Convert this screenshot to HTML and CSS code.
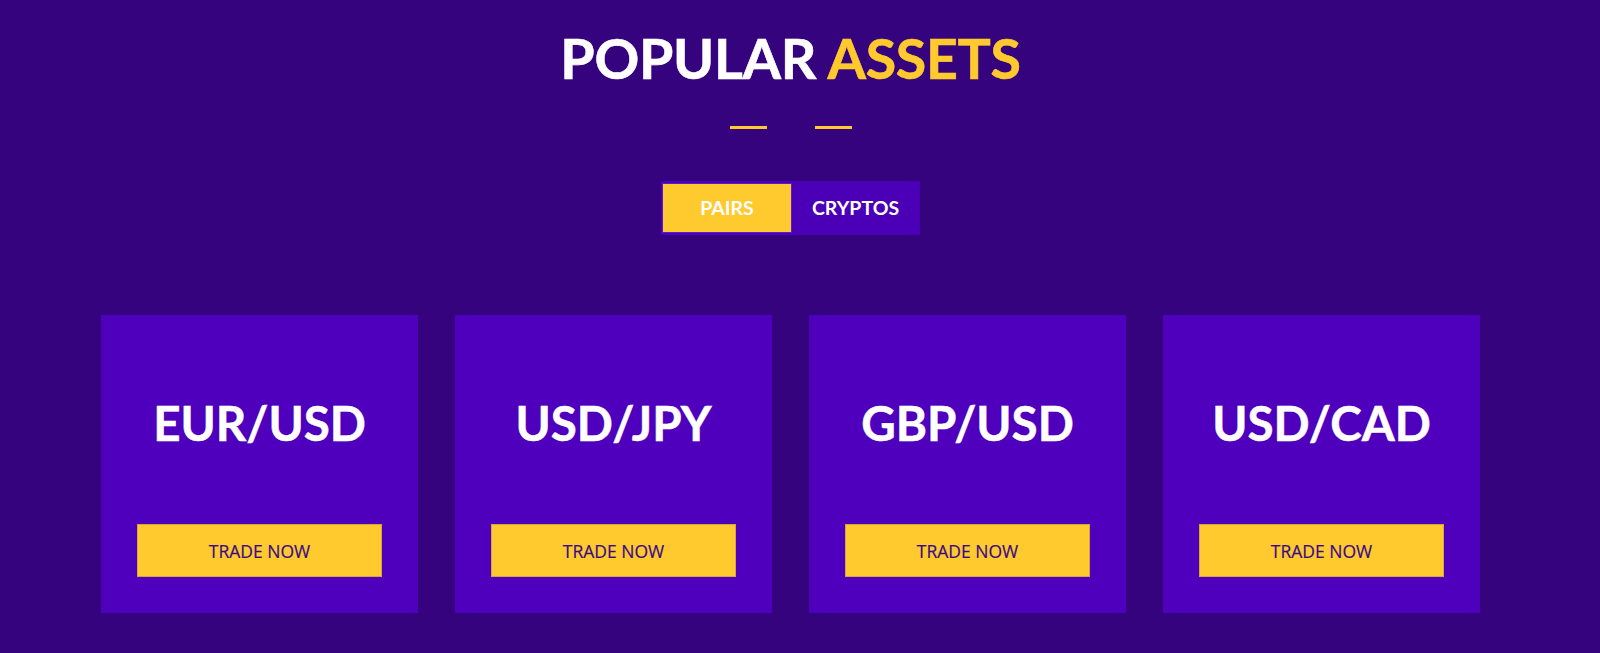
FILE: index.html
```html
<!DOCTYPE html>
<html lang="en">
<head>
<meta charset="utf-8">
<title>Popular Assets</title>
<link rel="stylesheet" href="styles.css">
</head>
<body>
<section class="assets">
  <h2 class="title">POPULAR <span class="accent">ASSETS</span></h2>
  <div class="dashes"><span class="dash"></span><span class="dash"></span></div>
  <div class="tabs">
    <button class="tab tab-active">PAIRS</button>
    <button class="tab">CRYPTOS</button>
  </div>
  <div class="cards">
    <div class="card">
      <div class="card-name">EUR/USD</div>
      <a class="trade" href="#">TRADE NOW</a>
    </div>
    <div class="card">
      <div class="card-name">USD/JPY</div>
      <a class="trade" href="#">TRADE NOW</a>
    </div>
    <div class="card">
      <div class="card-name">GBP/USD</div>
      <a class="trade" href="#">TRADE NOW</a>
    </div>
    <div class="card">
      <div class="card-name">USD/CAD</div>
      <a class="trade" href="#">TRADE NOW</a>
    </div>
  </div>
</section>
</body>
</html>
```

FILE: styles.css
```css
html, body {
  margin: 0;
  padding: 0;
  background: #36037e;
  height: 100%;
}

body {
  font-family: Lato, "Open Sans", sans-serif;
  overflow: hidden;
}

.assets {
  width: 1581px;
  padding-top: 25px;
  display: flex;
  flex-direction: column;
  align-items: center;
}

.title {
  margin: 0;
  font-size: 55.5px;
  line-height: 1.2;
  font-weight: 700;
  letter-spacing: -0.3px;
  color: #ffffff;
  -webkit-text-stroke: 0.6px currentColor;
}

.accent {
  color: #ffca2e;
}

.dashes {
  margin-top: 34px;
  display: flex;
  gap: 48px;
}

.dash {
  display: block;
  width: 37px;
  height: 3px;
  background: #ffca2e;
}

.tabs {
  margin-top: 52px;
  display: flex;
  padding: 3px 0 3px 2px;
  background: #4b00b8;
}

.tab {
  border: 0;
  margin: 0;
  width: 129px;
  height: 48px;
  padding: 0;
  background: transparent;
  color: #ffffff;
  font-family: Lato, sans-serif;
  font-weight: 700;
  font-size: 19.5px;
  cursor: pointer;
}

.tab-active {
  width: 128px;
  background: #ffca2e;
  box-shadow: 0 0 0 1px #5a1ad0;
}

.cards {
  margin-top: 80px;
  display: flex;
  gap: 37px;
}

.card {
  width: 317px;
  height: 298px;
  box-sizing: border-box;
  padding: 79px 36px 36px;
  background: #4e00bc;
  display: flex;
  flex-direction: column;
  align-items: center;
}

.card-name {
  font-family: Lato, sans-serif;
  font-weight: 700;
  font-size: 47.5px;
  line-height: 1.2;
  color: #ffffff;
  -webkit-text-stroke: 0.5px currentColor;
}

.trade {
  margin-top: auto;
  width: 100%;
  height: 53px;
  box-sizing: border-box;
  border: 1px solid #d9a43a;
  background: #ffca2e;
  color: #3b0a85;
  font-family: "Open Sans", sans-serif;
  font-size: 17.5px;
  text-decoration: none;
  display: flex;
  align-items: center;
  justify-content: center;
  padding-top: 1px;
  -webkit-text-stroke: 0.2px currentColor;
}
```
